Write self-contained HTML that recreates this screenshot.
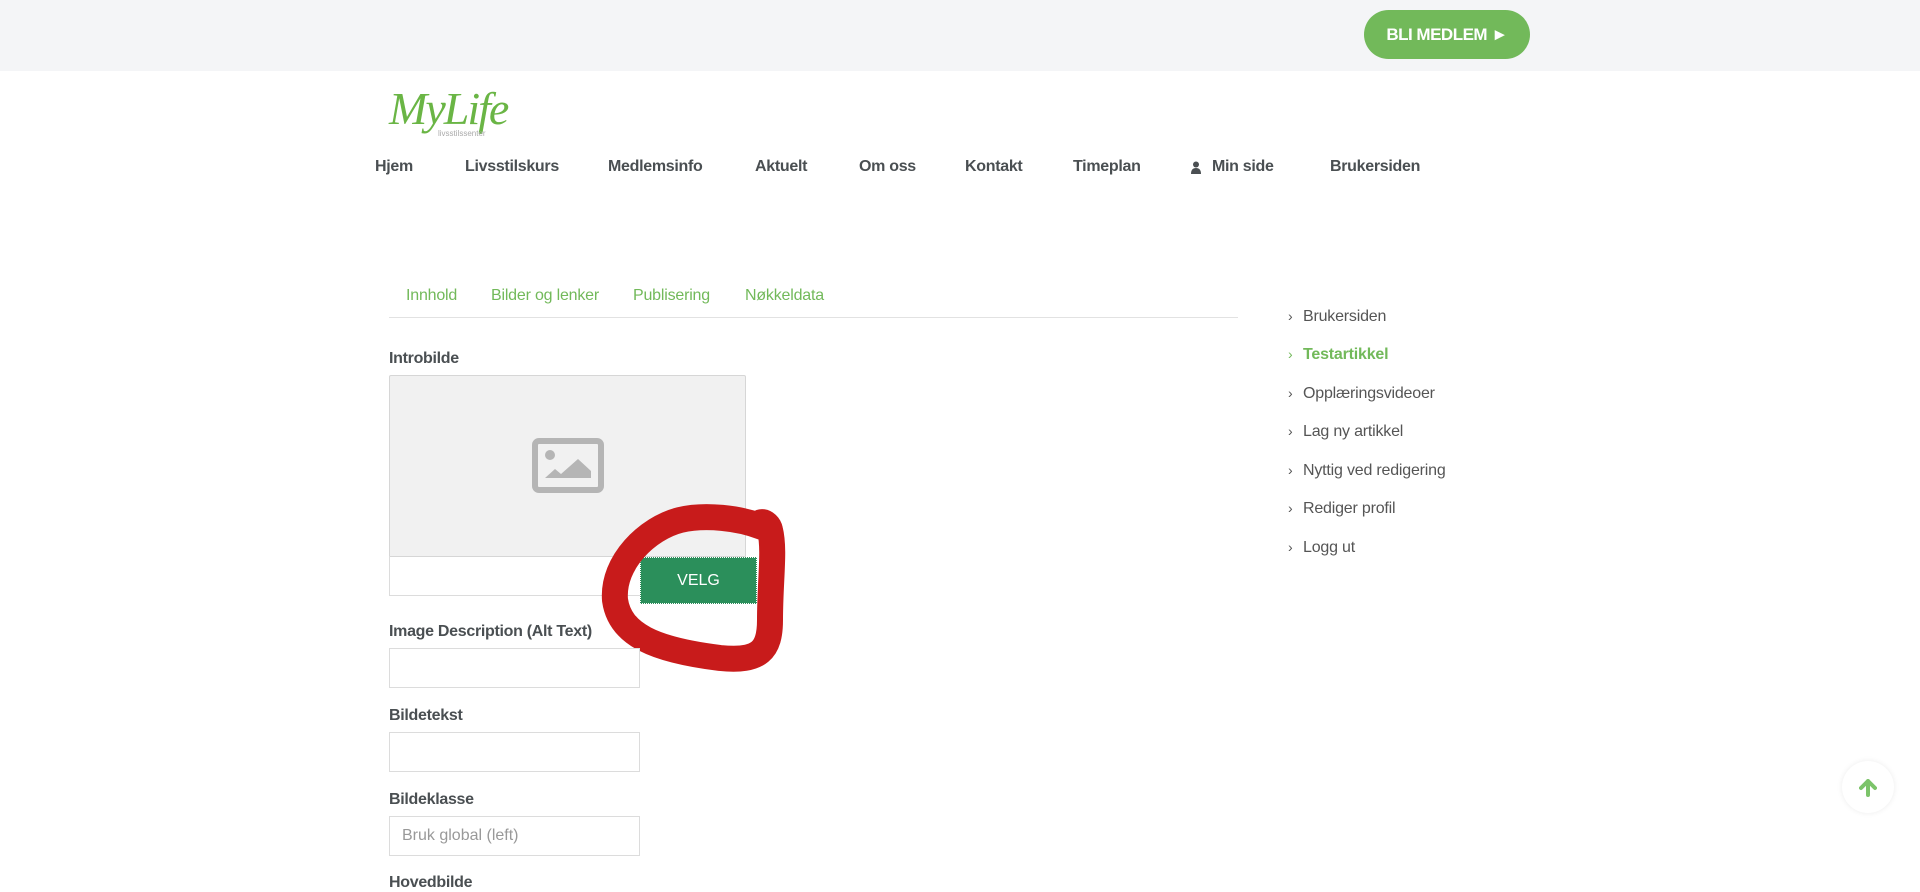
<!DOCTYPE html>
<html><head><meta charset="utf-8"><style>
*{margin:0;padding:0;box-sizing:border-box}
body{width:1920px;height:891px;overflow:hidden;background:#fff;font-family:"Liberation Sans",sans-serif;position:relative;color:#4a4f52}
.top{position:absolute;left:0;top:0;width:1920px;height:71px;background:#f4f5f7}
.btn{position:absolute;left:1364px;top:10px;width:166px;height:49px;border-radius:25px;background:#72b95a;color:#fff;font-weight:bold;font-size:17px;line-height:49px;text-align:center;letter-spacing:-0.5px}
.abs{position:absolute;white-space:nowrap}
.nav{top:158px;font-weight:bold;font-size:16px;color:#4a4f52;letter-spacing:-0.3px}
.tab{top:287px;font-size:16px;color:#72b95a;letter-spacing:-0.2px}
.lbl{font-weight:bold;font-size:16px;color:#4a4f52;letter-spacing:-0.3px}
.inp{position:absolute;left:389px;width:251px;height:40px;border:1px solid #dcdcdc;background:#fff}
.side{left:1288px;font-size:16px;color:#555;letter-spacing:-0.2px}
.side span{display:inline-block;width:15px;font-size:14px}
</style></head><body>
<div class="top"></div>
<div class="btn">BLI MEDLEM ►</div>
<div class="abs" style="left:389px;top:82px;font-family:'Liberation Serif',serif;font-style:italic;font-size:46px;color:#6ab545;letter-spacing:-2px">MyLife</div>
<div class="abs" style="left:438px;top:129px;font-size:8px;color:#aaa">livsstilssenter</div>
<div class="abs nav" style="left:375px">Hjem</div>
<div class="abs nav" style="left:465px">Livsstilskurs</div>
<div class="abs nav" style="left:608px">Medlemsinfo</div>
<div class="abs nav" style="left:755px">Aktuelt</div>
<div class="abs nav" style="left:859px">Om oss</div>
<div class="abs nav" style="left:965px">Kontakt</div>
<div class="abs nav" style="left:1073px">Timeplan</div>
<svg class="abs" style="left:1191px;top:161px" width="10" height="13" viewBox="0 0 10 13"><circle cx="5" cy="3.5" r="3" fill="#4a4f52"/><path d="M0 13 Q0 7 5 7 Q10 7 10 13Z" fill="#4a4f52"/></svg>
<div class="abs nav" style="left:1212px">Min side</div>
<div class="abs nav" style="left:1330px">Brukersiden</div>

<div class="abs tab" style="left:406px">Innhold</div>
<div class="abs tab" style="left:491px">Bilder og lenker</div>
<div class="abs tab" style="left:633px">Publisering</div>
<div class="abs tab" style="left:745px">Nøkkeldata</div>
<div class="abs" style="left:389px;top:317px;width:849px;height:1px;background:#e2e2e2"></div>

<div class="abs lbl" style="left:389px;top:350px">Introbilde</div>
<div class="abs" style="left:389px;top:375px;width:357px;height:182px;background:#f1f1f1;border:1px solid #d6d6d6;border-radius:2px 2px 0 0"></div>
<svg class="abs" style="left:532px;top:438px" width="72" height="55" viewBox="0 0 72 55"><rect x="3" y="3" width="66" height="49" rx="4" fill="none" stroke="#b5b5b5" stroke-width="6"/><circle cx="18" cy="17" r="5" fill="#b5b5b5"/><path d="M13 40 L23 31 L29 36 L46 21 L59 33 L59 40Z" fill="#b5b5b5"/></svg>
<div class="abs" style="left:389px;top:556px;width:357px;height:40px;border:1px solid #dcdcdc;border-top:none"></div>
<div class="abs" style="left:640px;top:557px;width:117px;height:47px;background:#2b8f5b;border:1px dotted #fff;color:#fff;font-size:16px;text-align:center;line-height:45px">VELG</div>
<svg class="abs" style="left:0;top:0" width="1920" height="891"><path d="M762 527 C740 518 705 514 680 520 C648 528 612 562 615 600 C620 635 655 650 720 658 C760 662 770 650 770 620 C770 580 775 550 770 530 C768 520 755 520 762 527" fill="none" stroke="#c81b1b" stroke-width="26" stroke-linejoin="round" stroke-linecap="round"/></svg>

<div class="abs lbl" style="left:389px;top:623px">Image Description (Alt Text)</div>
<div class="inp" style="top:648px"></div>
<div class="abs lbl" style="left:389px;top:707px">Bildetekst</div>
<div class="inp" style="top:732px"></div>
<div class="abs lbl" style="left:389px;top:791px">Bildeklasse</div>
<div class="inp" style="top:816px;padding:10px 12px;font-size:16px;color:#999">Bruk global (left)</div>
<div class="abs lbl" style="left:389px;top:874px">Hovedbilde</div>

<div class="abs side" style="top:308px"><span>›</span>Brukersiden</div>
<div class="abs side" style="top:346px;color:#72b95a;font-weight:bold"><span style="font-weight:normal">›</span>Testartikkel</div>
<div class="abs side" style="top:385px"><span>›</span>Opplæringsvideoer</div>
<div class="abs side" style="top:423px"><span>›</span>Lag ny artikkel</div>
<div class="abs side" style="top:462px"><span>›</span>Nyttig ved redigering</div>
<div class="abs side" style="top:500px"><span>›</span>Rediger profil</div>
<div class="abs side" style="top:539px"><span>›</span>Logg ut</div>

<div class="abs" style="left:1842px;top:761px;width:52px;height:52px;border-radius:50%;background:#fff;box-shadow:0 0 6px rgba(0,0,0,0.08)"></div>
<svg class="abs" style="left:1859px;top:779px" width="18" height="18" viewBox="0 0 18 18"><path d="M9 2 L16 9 M9 2 L2 9 M9 2 L9 16" stroke="#7cc46a" stroke-width="4" fill="none" stroke-linecap="round"/></svg>
</body></html>
